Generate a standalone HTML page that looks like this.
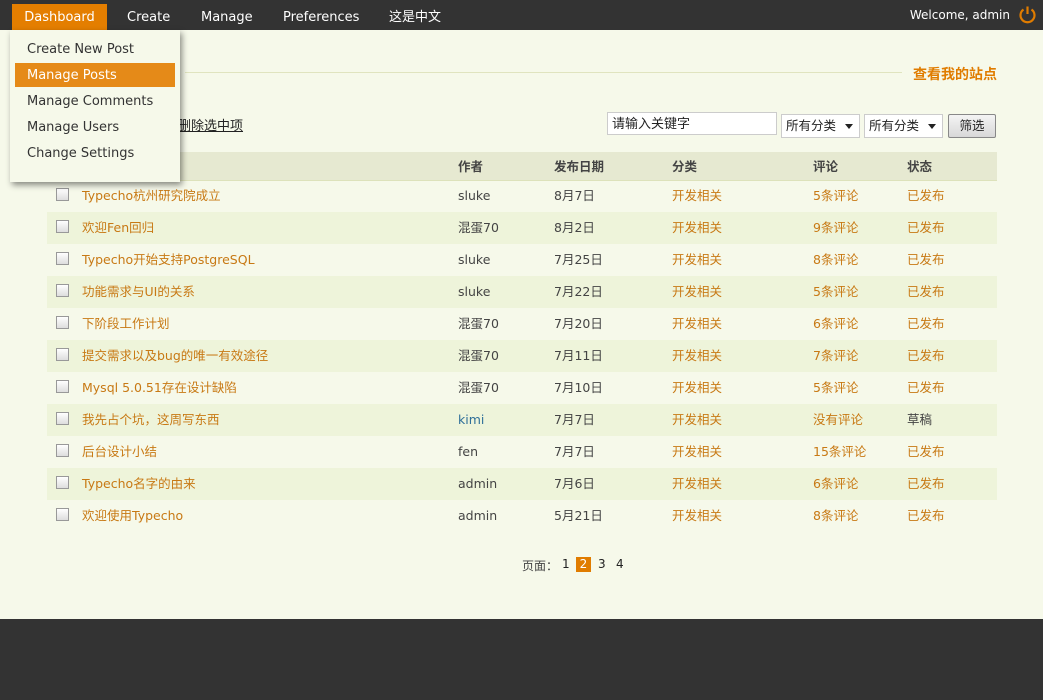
<!DOCTYPE html>
<html><head><meta charset="utf-8"><style>
*{margin:0;padding:0;box-sizing:border-box}
body{width:1043px;height:700px;background:#f6f9ea;font-family:"DejaVu Sans","Noto Sans CJK SC",sans-serif;font-size:12px;color:#444;position:relative;overflow:hidden}
.top{position:absolute;left:0;top:0;width:1043px;height:30px;background:#333}
.top .tab{position:absolute;top:4px;height:26px;line-height:27px;color:#fff;font-size:13px}
.dash{left:12px;width:95px;background:#e47e00;text-align:center}
.welcome{position:absolute;right:33px;top:8px;color:#fff;font-size:12px}
.dd{position:absolute;left:10px;top:30px;width:170px;height:152px;background:#f6f9ea;box-shadow:2px 3px 6px rgba(0,0,0,.45)}
.dd div{position:absolute;left:5px;width:160px;height:24px;line-height:24px;padding-left:12px;font-size:13px;color:#333}
.dd .on{background:#e58a18;color:#fff}
.abs{position:absolute}
.or{color:#c87914}
table{position:absolute;left:47px;top:152px;width:950px;border-collapse:collapse}
th{height:28px;background:#e6e9d1;text-align:left;font-weight:bold;color:#444;border-bottom:1px solid #dde2bb;font-size:12.5px}
td{height:32px;font-size:12.5px;line-height:16px;vertical-align:middle}
tr.a td{background:#eef4da}
.cb{display:inline-block;width:13px;height:13px;border:1px solid #999;background:linear-gradient(#fff,#ddd);margin-left:9px;vertical-align:middle;margin-top:-4px}
.sel{position:absolute;top:114px;height:24px;border:1px solid #ccc;background:#fff;font-size:12.5px;line-height:22px;padding-left:4px;color:#222}
.sel:after{content:"";position:absolute;right:6px;top:9px;border:4px solid transparent;border-top:5px solid #222}
</style></head><body>
<div class="top">
<div class="tab dash">Dashboard</div>
<div class="tab" style="left:127px">Create</div>
<div class="tab" style="left:201px">Manage</div>
<div class="tab" style="left:283px">Preferences</div>
<div class="tab" style="left:389px">这是中文</div>
<div class="welcome">Welcome, admin</div>
<svg class="abs" style="left:1018px;top:5px" width="19" height="19" viewBox="0 0 19 19"><path d="M5.5 4.5A7 7 0 1 0 13.5 4.5" fill="none" stroke="#e07c00" stroke-width="2.2"/><path d="M9.5 1.5V9" stroke="#e07c00" stroke-width="2.2"/></svg>
</div>
<div class="abs" style="left:185px;top:72px;width:717px;height:1px;background:#e0e4bf"></div>
<div class="abs or" style="left:913px;top:64px;font-weight:bold;font-size:14px;color:#e07c00">查看我的站点</div>
<div class="abs" style="left:178px;top:115px;font-size:13px;color:#222;text-decoration:underline">删除选中项</div>
<div class="abs" style="left:607px;top:112px;width:170px;height:23px;border:1px solid #ccc;background:#fff;font-size:13px;line-height:23px;padding-left:4px;color:#222">请输入关键字</div>
<div class="sel" style="left:781px;width:79px">所有分类</div>
<div class="sel" style="left:864px;width:79px">所有分类</div>
<div class="abs" style="left:948px;top:114px;width:48px;height:24px;border:1px solid #888;border-radius:2px;background:linear-gradient(#f4f4f4,#d8d8d8);text-align:center;line-height:22px;font-size:12.5px;color:#222">筛选</div>
<table>
<tr><th style="width:35px"></th><th style="width:376px"></th><th style="width:96px">作者</th><th style="width:118px">发布日期</th><th style="width:141px">分类</th><th style="width:94px">评论</th><th>状态</th></tr>
<tr><td><span class="cb"></span></td><td class="or">Typecho杭州研究院成立</td><td>sluke</td><td>8月7日</td><td class="or">开发相关</td><td class="or">5条评论</td><td class="or">已发布</td></tr>
<tr class="a"><td><span class="cb"></span></td><td class="or">欢迎Fen回归</td><td>混蛋70</td><td>8月2日</td><td class="or">开发相关</td><td class="or">9条评论</td><td class="or">已发布</td></tr>
<tr><td><span class="cb"></span></td><td class="or">Typecho开始支持PostgreSQL</td><td>sluke</td><td>7月25日</td><td class="or">开发相关</td><td class="or">8条评论</td><td class="or">已发布</td></tr>
<tr class="a"><td><span class="cb"></span></td><td class="or">功能需求与UI的关系</td><td>sluke</td><td>7月22日</td><td class="or">开发相关</td><td class="or">5条评论</td><td class="or">已发布</td></tr>
<tr><td><span class="cb"></span></td><td class="or">下阶段工作计划</td><td>混蛋70</td><td>7月20日</td><td class="or">开发相关</td><td class="or">6条评论</td><td class="or">已发布</td></tr>
<tr class="a"><td><span class="cb"></span></td><td class="or">提交需求以及bug的唯一有效途径</td><td>混蛋70</td><td>7月11日</td><td class="or">开发相关</td><td class="or">7条评论</td><td class="or">已发布</td></tr>
<tr><td><span class="cb"></span></td><td class="or">Mysql 5.0.51存在设计缺陷</td><td>混蛋70</td><td>7月10日</td><td class="or">开发相关</td><td class="or">5条评论</td><td class="or">已发布</td></tr>
<tr class="a"><td><span class="cb"></span></td><td class="or">我先占个坑，这周写东西</td><td style="color:#2f6f99">kimi</td><td>7月7日</td><td class="or">开发相关</td><td class="or">没有评论</td><td>草稿</td></tr>
<tr><td><span class="cb"></span></td><td class="or">后台设计小结</td><td>fen</td><td>7月7日</td><td class="or">开发相关</td><td class="or">15条评论</td><td class="or">已发布</td></tr>
<tr class="a"><td><span class="cb"></span></td><td class="or">Typecho名字的由来</td><td>admin</td><td>7月6日</td><td class="or">开发相关</td><td class="or">6条评论</td><td class="or">已发布</td></tr>
<tr><td><span class="cb"></span></td><td class="or">欢迎使用Typecho</td><td>admin</td><td>5月21日</td><td class="or">开发相关</td><td class="or">8条评论</td><td class="or">已发布</td></tr>
</table>
<div class="abs" style="left:522px;top:557px;font-size:12px;color:#444">页面：</div>
<div class="abs" style="left:562px;top:557px;color:#222">1</div>
<div class="abs" style="left:576px;top:557px;width:15px;height:15px;background:#e07c00;color:#fff;text-align:center;line-height:15px">2</div>
<div class="abs" style="left:598px;top:557px;color:#222">3</div>
<div class="abs" style="left:616px;top:557px;color:#222">4</div>
<div class="abs" style="left:0;top:619px;width:1043px;height:81px;background:#333"></div>
<div class="dd">
<div style="top:8px">Create New Post</div>
<div class="on" style="top:33px;line-height:26px">Manage Posts</div>
<div style="top:60px">Manage Comments</div>
<div style="top:86px">Manage Users</div>
<div style="top:112px">Change Settings</div>
</div>
</body></html>
